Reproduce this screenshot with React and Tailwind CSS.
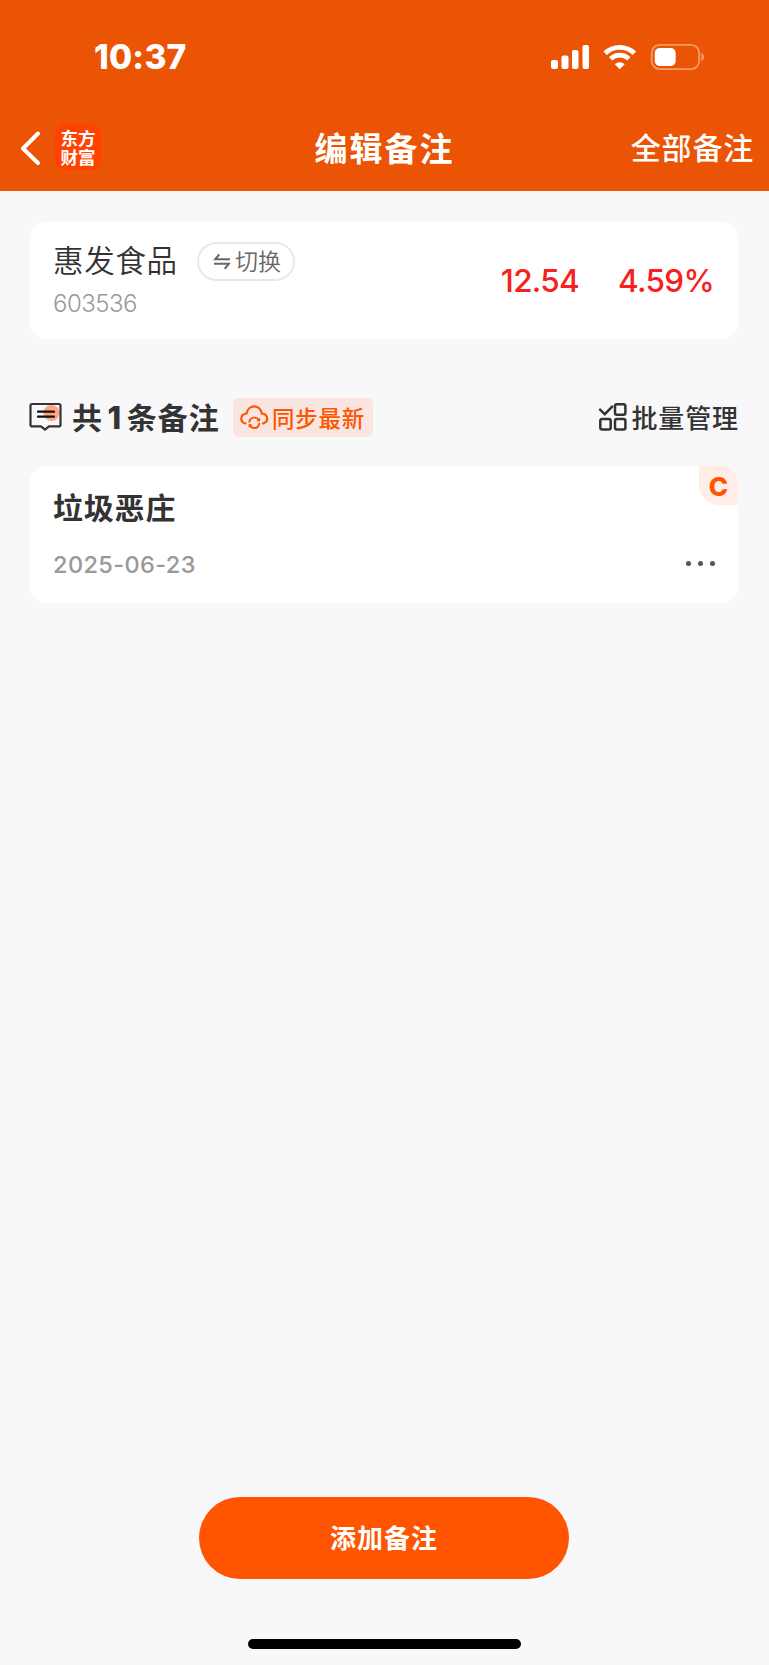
import React from 'react';

const stock = { name: '惠发食品', code: '603536', price: '12.54', change: '4.59%' };

const notes = [{ id: 1, text: '垃圾恶庄', date: '2025-06-23', tag: 'C' }];

function StatusBar() {
  return (
    <div className="flex h-[107px] items-start justify-between pl-[94px] pr-[63px] pt-[37px] text-white">
      <span className="text-[33.5px] font-extrabold leading-[40px] tracking-[0.2px]">10:37</span>
      <div className="flex pt-[6px]">
        {/* Signal */}
        <svg width="39" height="28" viewBox="0 0 39 28" fill="currentColor" className="mr-[13px]">
          <rect x="0" y="17" width="7" height="9" rx="2" />
          <rect x="10.5" y="12.5" width="7" height="13.5" rx="2" />
          <rect x="21" y="7" width="6.5" height="19" rx="2" />
          <rect x="31.5" y="2" width="6.5" height="24" rx="2" />
        </svg>
        {/* Wifi */}
        <svg width="34" height="28" viewBox="0 0 34 28" fill="none" stroke="currentColor" className="mr-[13px]">
          <path d="M2.1 10.2a21.2 21.2 0 0 1 29.3 0" strokeWidth="4.8" />
          <path d="M7.6 15.7a13.4 13.4 0 0 1 18.3 0" strokeWidth="4.6" />
          <path d="M16.7 26.3l-5-5.1a7.6 7.6 0 0 1 10 0z" fill="currentColor" stroke="none" />
        </svg>
        {/* Battery */}
        <svg width="56" height="28" viewBox="0 0 56 28" fill="none">
          <rect x="1.7" y="1.9" width="47.5" height="24.2" rx="8" stroke="#f59a68" strokeWidth="1.8" />
          <rect x="4.7" y="5" width="21" height="18" rx="5" fill="#fff" />
          <path d="M51.3 9.8c3.7 1.5 3.7 6.9 0 8.4z" fill="#f59a68" />
        </svg>
      </div>
    </div>
  );
}

function NavBar() {
  return (
    <div className="grid h-[84px] grid-cols-[1fr_auto_1fr] items-start text-white">
      <div className="flex items-start pl-[19px] pt-[17px]">
        <svg width="24" height="46" viewBox="0 0 24 46" fill="none" stroke="currentColor" strokeWidth="4" strokeLinecap="round" strokeLinejoin="round" className="mr-3">
          <path d="M19 9.5L4 24.5L19 39" />
        </svg>
        <div className="flex h-[46px] w-[46px] flex-col items-center justify-center rounded-[10px] bg-[#ff4200] pt-px text-[17.5px] font-bold leading-[19px]">
          <span>东方</span>
          <span>财富</span>
        </div>
      </div>
      <h1 className="-ml-[1px] -mr-[1px] pt-[18px] text-[33px] font-bold leading-[48px] tracking-[2px]">编辑备注</h1>
      <span className="pr-[15px] pt-[17px] text-right text-[30px] font-medium leading-[48px] tracking-[0.8px]">全部备注</span>
    </div>
  );
}

function StockCard() {
  return (
    <section className="flex h-[117px] rounded-[16px] bg-white pl-[23px] pr-[24px]">
      <div className="flex-1">
        <div className="flex items-center pt-5">
          <span className="-mt-px w-[144px] text-[30.5px] font-[350] leading-[38px] tracking-[0.7px] text-[#333]">{stock.name}</span>
          <button className="flex h-[39px] w-[98px] items-center rounded-full border-2 border-[#e8e8e8] pl-[14px] text-[#666]">
            <svg width="18" height="18" viewBox="0 0 18 18" fill="none" stroke="currentColor" strokeWidth="2" className="mr-[4px]">
              <path d="M6.2 1.5L2.2 6.2H17M1 10.8h14.8l-4 5" />
            </svg>
            <span className="whitespace-nowrap pt-px text-[23px] font-[350] leading-[35px]">切换</span>
          </button>
        </div>
        <div className="mt-[8px] text-[24px] font-[340] leading-[30px] tracking-[-0.5px] text-[#999]">{stock.code}</div>
      </div>
      <div className="flex items-center gap-[39px] pt-px text-[31.5px] font-medium tracking-[-0.7px] text-[#f82020]">
        <span>{stock.price}</span>
        <span>{stock.change}</span>
      </div>
    </section>
  );
}

function SectionBar({ count }) {
  return (
    <div className="mt-[59px] flex h-[39px] items-center">
      <svg width="34" height="30" viewBox="0 0 34 30" fill="none" className="mr-[9px] -ml-px -mt-px">
        <circle cx="22.5" cy="11" r="8" fill="#ffa680" />
        <path d="M3.2 2h26.6q1.700 0 1.700 1.700v19q0 1.700-1.700 1.700H20l-4 3.300-4-3.300H3.200q-1.700 0-1.700-1.700v-19q0-1.700 1.700-1.700z" stroke="#333" strokeWidth="2.200" strokeLinejoin="round" />
        <path d="M9 9.700H25M9 14.700H25" stroke="#111" strokeWidth="2.200" strokeLinecap="round" />
      </svg>
      <h2 className="w-[161px] whitespace-nowrap pt-px text-[30px] font-bold leading-[39px] tracking-[1px] text-[#333]">
        共<span className="px-[4.5px] text-[31px] font-extrabold">{count}</span>条备注
      </h2>
      <button className="flex h-[39px] w-[140px] items-center rounded-[5px] bg-[#f9e6e0] pl-[7px] text-[#ff5500]">
        <svg width="30" height="26" viewBox="0 0 30 26" fill="none" stroke="currentColor" strokeWidth="2.200" strokeLinecap="round" className="mr-[2px]">
          <path d="M5.500 18.500C-.3 17.200-.2 9.400 6.500 8.500C8.200-.9 20-.9 21.800 8.500C28.600 9.300 28.900 17 23 18.500" />
          <path d="M9.300 16.800C10.300 11.800 16.600 11.300 19 15.300M19.300 18.500C18.400 23.800 12.200 24.500 9.800 20.300" strokeWidth="1.900" />
          <path d="M19.600 13.500v2.200h-2.200M9.200 22v-2.200h2.200" strokeWidth="1.200" />
        </svg>
        <span className="whitespace-nowrap pt-px text-[22.400px] font-medium leading-[37px] tracking-[0.900px]">同步最新</span>
      </button>
      <button className="ml-auto flex items-center text-[#333]">
        <svg width="30" height="30" viewBox="0 0 30 30" fill="none" stroke="currentColor" strokeWidth="2.500" className="mr-[3px] -mt-px">
          <path d="M2.200 7.800L6.800 12.200L14 4.800" strokeLinecap="square" />
          <rect x="17" y="2.300" width="10.400" height="10.400" rx="2" />
          <rect x="2.300" y="17" width="10.400" height="10.400" rx="2" />
          <rect x="17" y="17" width="10.400" height="10.400" rx="2" />
        </svg>
        <span className="-mr-px whitespace-nowrap pt-px text-[26px] font-medium leading-[39px] tracking-[0.900px]">批量管理</span>
      </button>
    </div>
  );
}

function NoteCard({ note }) {
  return (
    <article className="relative mt-[29px] h-[137px] overflow-hidden rounded-[16px] bg-white pl-[23px] pr-[23px]">
      <span className="absolute right-0 top-0 flex h-[39px] w-[39px] items-center justify-center rounded-bl-[20px] bg-[#ffede6] pt-[2px] text-[26px] font-extrabold text-[#ff5500]">
        {note.tag}
      </span>
      <h3 className="pt-[20px] text-[30px] font-bold leading-[44px] tracking-[0.800px] text-[#333]">{note.text}</h3>
      <div className="mt-[20px] flex items-center justify-between">
        <time className="text-[23.500px] font-[550] leading-[30px] tracking-[0.400px] text-[#999]">{note.date}</time>
        <div className="-mt-[4px] flex gap-[7px] text-[#555]">
          <i className="h-[5px] w-[5px] rounded-full bg-current" />
          <i className="h-[5px] w-[5px] rounded-full bg-current" />
          <i className="h-[5px] w-[5px] rounded-full bg-current" />
        </div>
      </div>
    </article>
  );
}

export default function App() {
  return (
    <div className="flex h-[1665px] w-[769px] flex-col bg-[#f8f8fb] font-['Inter','Noto_Sans_CJK_SC',sans-serif]">
      <header className="h-[191px] bg-[#ea5404]">
        <StatusBar />
        <NavBar />
      </header>

      <main className="flex-1 pl-[30px] pr-[31px] pt-[31px]">
        <StockCard />
        <SectionBar count={notes.length} />
        {notes.map((note) => (
          <NoteCard key={note.id} note={note} />
        ))}
      </main>

      <footer className="flex h-[168px] flex-col items-center pr-px">
        <button className="h-[82px] w-[370px] rounded-full bg-[#ff5500] pt-px text-[26px] font-bold tracking-[1px] text-white">
          添加备注
        </button>
        <div className="mt-[60px] h-[10px] w-[273px] rounded-full bg-black" />
      </footer>
    </div>
  );
}
